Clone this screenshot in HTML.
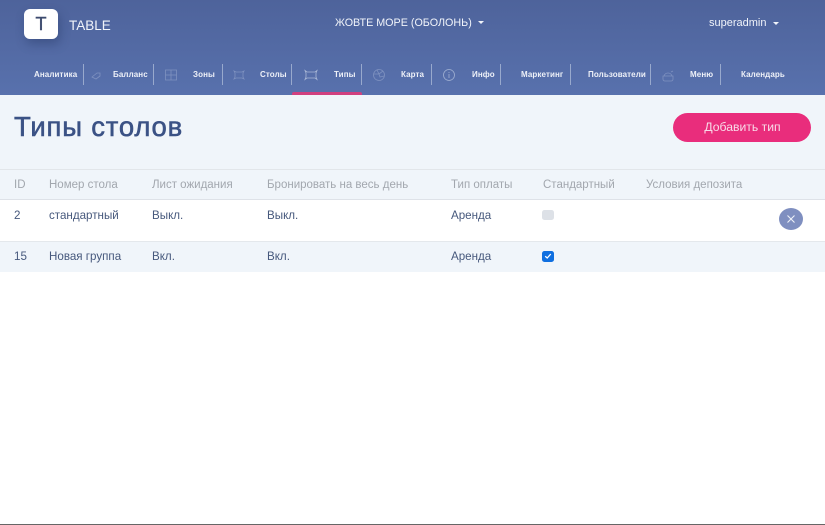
<!DOCTYPE html>
<html lang="ru"><head><meta charset="utf-8"><style>
html,body{margin:0;padding:0;width:825px;height:525px;overflow:hidden;background:#fff}
body{position:relative;font-family:"Liberation Sans","Noto Sans CJK JP",sans-serif}
.a{position:absolute;white-space:nowrap}
#hd{left:0;top:0;width:825px;height:95px;background:linear-gradient(180deg,#4e639b 0%,#5871ad 100%)}
#sec{left:0;top:95px;width:825px;height:177px;background:#f0f5fa}
.nav{font-size:8px;font-weight:bold;color:#eef1f8;top:69px;line-height:11px;letter-spacing:.1px}
.sep{top:64px;width:1px;height:21px;background:#98a9cd}
.ic{top:68px;width:14px;height:14px;fill:none;stroke:#7f92c0;stroke-width:.8}
.th{font-size:11.5px;color:#a2a7ae;top:178px;line-height:14px}
.td{font-size:11.6px;color:#46587c;line-height:14px}
.r1{top:209px}.r2{top:250px}
</style></head><body>
<div class="a" id="hd"></div>
<div class="a" style="left:24px;top:9px;width:34px;height:30px;background:#fff;border-radius:6px;box-shadow:2px 5px 10px rgba(30,45,90,.35)"></div>
<div class="a" style="left:24px;top:14px;width:34px;text-align:center;font-size:18px;color:#3d4b6e;line-height:20px;-webkit-text-stroke:.4px #3d4b6e">T</div>
<div class="a" style="left:69px;top:18px;font-size:13.5px;color:#f1f4fa;line-height:15px">TABLE</div>
<div class="a" style="left:335px;top:17px;font-size:10.75px;color:#f1f4fa;line-height:13px">ЖОВТЕ МОРЕ (ОБОЛОНЬ)</div>
<div class="a" style="left:478px;top:21px;border:3.5px solid transparent;border-top:3.5px solid #f1f4fa;border-bottom:0"></div>
<div class="a" style="left:709px;top:16px;font-size:11px;color:#f1f4fa;line-height:14px">superadmin</div>
<div class="a" style="left:773px;top:22px;border:3px solid transparent;border-top:3px solid #f1f4fa;border-bottom:0"></div>

<div class="a nav" style="left:34px">Аналитика</div>
<div class="a sep" style="left:83px"></div>
<svg class="a ic" style="left:89px" viewBox="0 0 14 14"><path d="M3 9 8 5h3v3l-4 3z"/></svg>
<div class="a nav" style="left:113px">Балланс</div>
<div class="a sep" style="left:153px"></div>
<svg class="a ic" style="left:164px" viewBox="0 0 14 14"><path d="M1.500 2h11v10h-11zM7 2v10M1.500 7h11"/></svg>
<div class="a nav" style="left:193px">Зоны</div>
<div class="a sep" style="left:222px"></div>
<svg class="a ic" style="left:232px" viewBox="0 0 14 14"><path d="M2 3 4 4h6l2-1-1 2v4l1 2-2-1H4l-2 1 1-2V5z"/></svg>
<div class="a nav" style="left:260px">Столы</div>
<div class="a sep" style="left:291px"></div>
<svg class="a ic" style="left:304px;stroke:#a9b7d6" viewBox="0 0 14 14"><path d="M1 2.500 3 4h8l2-1.500L12 5v4l1 2.500L11 10H3l-2 1.500L2 9V5z"/></svg>
<div class="a nav" style="left:334px">Типы</div>
<div class="a" style="left:292px;top:92px;width:70px;height:3px;background:#d0407f;border-radius:2px 2px 0 0"></div>
<div class="a sep" style="left:361px"></div>
<svg class="a ic" style="left:372px" viewBox="0 0 14 14"><circle cx="7" cy="7" r="5.500"/><path d="M2 6h5l1 3 4-1M5 2l2 4 4-3"/></svg>
<div class="a nav" style="left:401px">Карта</div>
<div class="a sep" style="left:431px"></div>
<svg class="a ic" style="left:442px;stroke:#a0b0d2" viewBox="0 0 14 14"><circle cx="7" cy="7" r="5.500"/><path d="M7 6v4M7 4v1"/></svg>
<div class="a nav" style="left:472px">Инфо</div>
<div class="a sep" style="left:500px"></div>
<div class="a nav" style="left:521px">Маркетинг</div>
<div class="a sep" style="left:570px"></div>
<div class="a nav" style="left:588px">Пользователи</div>
<div class="a sep" style="left:650px"></div>
<svg class="a ic" style="left:661px;top:69px" viewBox="0 0 14 14"><path d="M2 7h10v3q0 2-2 2H4q-2 0-2-2zM3 7q1-3 4-3t4 3M10 3l2-1"/></svg>
<div class="a nav" style="left:690px">Меню</div>
<div class="a sep" style="left:720px"></div>
<div class="a nav" style="left:741px">Календарь</div>

<div class="a" id="sec"></div>
<div class="a" style="left:14px;top:111px;font-size:27.5px;color:#3b5285;line-height:32px;letter-spacing:.8px;-webkit-text-stroke:.55px #3b5285">Типы столов</div>
<div class="a" style="left:674px;top:113px;width:137px;height:29px;border-radius:15px;background:#e92d7c;color:#f8dbe8;font-size:12.2px;line-height:29px;text-align:center;text-indent:1px;left:673px;width:138px">Добавить тип</div>

<div class="a" style="left:0;top:169px;width:825px;height:1px;background:#e2e6ea"></div>
<div class="a th" style="left:14px">ID</div>
<div class="a th" style="left:49px">Номер стола</div>
<div class="a th" style="left:152px">Лист ожидания</div>
<div class="a th" style="left:267px">Бронировать на весь день</div>
<div class="a th" style="left:451px">Тип оплаты</div>
<div class="a th" style="left:543px">Стандартный</div>
<div class="a th" style="left:646px">Условия депозита</div>
<div class="a" style="left:0;top:199px;width:825px;height:42px;background:#fff;border-top:1px solid #dee2e8;box-sizing:border-box"></div>
<div class="a" style="left:0;top:241px;width:825px;height:1px;background:#e4e8ec"></div>

<div class="a td r1" style="left:14px">2</div>
<div class="a td r1" style="left:49px">стандартный</div>
<div class="a td r1" style="left:152px">Выкл.</div>
<div class="a td r1" style="left:267px">Выкл.</div>
<div class="a td r1" style="left:451px">Аренда</div>
<div class="a" style="left:542px;top:210px;width:12px;height:10px;background:#dde1e7;border-radius:2.500px"></div>
<div class="a" style="left:779px;top:208px;width:24px;height:22px;border-radius:50%;background:#7f8fc0"></div>
<svg class="a" style="left:786px;top:214px" width="10" height="10" viewBox="0 0 10 10"><path d="M1.500 1.500l7 7M8.500 1.500l-7 7" stroke="#eef1f8" stroke-width="1.100" fill="none"/></svg>

<div class="a td r2" style="left:14px">15</div>
<div class="a td r2" style="left:49px">Новая группа</div>
<div class="a td r2" style="left:152px">Вкл.</div>
<div class="a td r2" style="left:267px">Вкл.</div>
<div class="a td r2" style="left:451px">Аренда</div>
<div class="a" style="left:542px;top:251px;width:12px;height:11px;background:#0f6fe0;border-radius:2.500px"></div>
<svg class="a" style="left:544px;top:252px" width="8" height="8" viewBox="0 0 8 8"><path d="M1.200 4.300 3.200 6 6.800 2" stroke="#fff" stroke-width="1.300" fill="none"/></svg>

<div class="a" style="left:0;top:524px;width:825px;height:1px;background:#666"></div>
</body></html>
